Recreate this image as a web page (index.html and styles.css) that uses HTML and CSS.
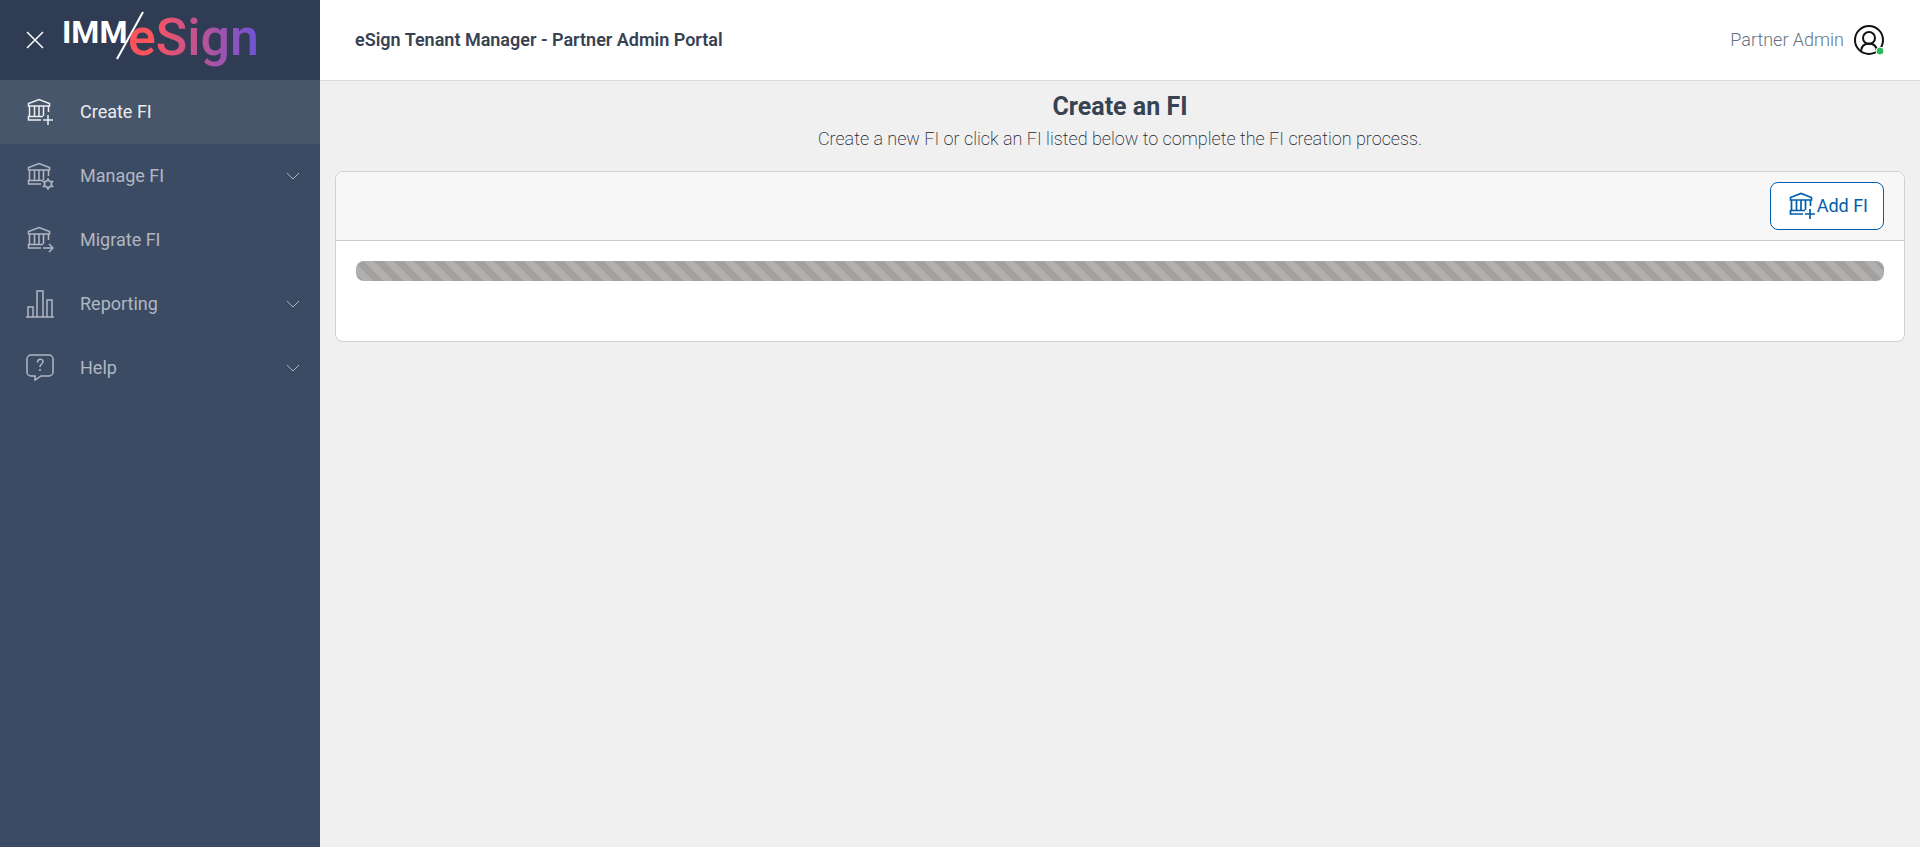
FILE: index.html
```html
<!DOCTYPE html>
<html lang="en">
<head>
    <meta charset="UTF-8">
    <meta name="viewport" content="width=device-width, initial-scale=1.0">
    <title>eSign Tenant Manager</title>
    <link rel="stylesheet" href="styles.css">
</head>
<body>
    <!-- shared icon shapes -->
    <svg class="sprite" aria-hidden="true">
        <symbol id="bank" viewBox="0 0 28 28">
            <path d="M2.500 8V5.500L13 1.500l10.500 4V8zM3.500 8v10M8.500 8v10M13 8v10M17.500 8v10M22.500 8v6M2 18.500h15M2.500 18v4H15"/>
        </symbol>
        <symbol id="chevron" viewBox="0 0 14 8">
            <path d="M1 1l6 6 6-6"/>
        </symbol>
    </svg>

    <aside class="sidebar">
        <div class="sidebar-header">
            <button class="close-btn" type="button" aria-label="Close menu">
                <svg width="18" height="18" viewBox="0 0 18 18"><path d="M1 1l16 16M17 1L1 17"/></svg>
            </button>
            <svg class="logo" width="240" height="80" viewBox="0 0 240 80" role="img" aria-label="IMM eSign">
                <defs>
                    <linearGradient id="logoFill" gradientUnits="userSpaceOnUse" x1="87" y1="20" x2="194" y2="20">
                        <stop offset="0" stop-color="#ff535b"/>
                        <stop offset="1" stop-color="#7054d6"/>
                    </linearGradient>
                </defs>
                <text class="logo-imm" x="0" y="43">IMM</text>
                <path class="logo-slash" d="M55 59L81 12"/>
                <text class="logo-esign" x="66" y="55">eSign</text>
            </svg>
        </div>
        <nav class="nav">
            <a class="nav-item active" href="#">
                <svg class="nav-icon" viewBox="0 0 28 28"><use href="#bank"/><path d="M22 17v10M17 22h10"/></svg>
                <span>Create FI</span>
            </a>
            <a class="nav-item" href="#">
                <svg class="nav-icon" viewBox="0 0 28 28"><use href="#bank"/><path d="M22 17l1.500 2.500h3L25 22l1.500 2.500h-3L22 27l-1.500-2.500h-3L19 22l-1.500-2.500h3z"/></svg>
                <span>Manage FI</span>
                <svg class="chevron"><use href="#chevron"/></svg>
            </a>
            <a class="nav-item" href="#">
                <svg class="nav-icon" viewBox="0 0 28 28"><use href="#bank"/><path d="M17 22h10M23 18l4 4-4 4"/></svg>
                <span>Migrate FI</span>
            </a>
            <a class="nav-item" href="#">
                <svg class="nav-icon" viewBox="0 0 28 28"><path d="M0 27h28M2 27V17h5v10M11 27V1h6v26M21 27V10h5v17"/></svg>
                <span>Reporting</span>
                <svg class="chevron"><use href="#chevron"/></svg>
            </a>
            <a class="nav-item" href="#">
                <svg class="nav-icon" viewBox="0 0 28 28"><path d="M5 1h18a4 4 0 0 1 4 4v13a4 4 0 0 1-4 4h-8l-6 4v-4H5a4 4 0 0 1-4-4V5a4 4 0 0 1 4-4zM11.500 8.500c0-4.500 5.500-4 5.500-1 0 2.500-3 2.500-3 5.500M14 15v2"/></svg>
                <span>Help</span>
                <svg class="chevron"><use href="#chevron"/></svg>
            </a>
        </nav>
    </aside>

    <div class="page">
        <header class="topbar">
            <div class="portal-name">eSign Tenant Manager - Partner Admin Portal</div>
            <a class="user" href="#">
                <span>Partner Admin</span>
                <svg width="31" height="31" viewBox="0 0 31 31">
                    <g class="avatar"><circle cx="15" cy="15" r="14"/><circle cx="15" cy="13" r="6"/><path d="M7 26c0-10 16-10 16 0"/></g>
                    <circle class="status" cx="26" cy="26" r="4"/>
                </svg>
            </a>
        </header>

        <main class="content">
            <h1>Create an FI</h1>
            <p class="subtitle">Create a new FI or click an FI listed below to complete the FI creation process.</p>

            <section class="card">
                <div class="card-header">
                    <button class="btn-add" type="button">
                        <svg class="btn-icon" viewBox="0 0 28 28"><use href="#bank"/><path d="M22 17v10M17 22h10"/></svg>
                        <span>Add FI</span>
                    </button>
                </div>
                <div class="card-body">
                    <div class="progress" role="progressbar" aria-label="Loading"></div>
                </div>
            </section>
        </main>
    </div>
</body>
</html>
```
FILE: styles.css
```css
* {
    box-sizing: border-box;
}
body {
    display: flex;
    min-height: 100vh;
    margin: 0;
    font-family: Roboto, "Liberation Sans", sans-serif;
    font-size: 18px;
    line-height: 24px;
    color: #374253;
    background: #f0f0f0;
}
svg {
    fill: none;
    stroke: currentColor;
    flex-shrink: 0;
}
.sprite {
    position: absolute;
    width: 0;
    height: 0;
}

/* sidebar */
.sidebar {
    width: 320px;
    flex-shrink: 0;
    background: #3c4b64;
}
.sidebar-header {
    display: flex;
    align-items: center;
    height: 80px;
    padding-left: 26px;
    background: #303c54;
}
.close-btn {
    display: flex;
    margin-right: 18px;
    padding: 0;
    border: 0;
    background: none;
    color: #fff;
    stroke-width: 1.5;
    cursor: pointer;
}
.logo text {
    stroke: none;
}
.logo .logo-imm {
    font-size: 32px;
    font-weight: 700;
    fill: #fff;
}
.logo .logo-esign {
    font-size: 52px;
    font-weight: 500;
    fill: url(#logoFill);
}
.logo-slash {
    stroke: #fff;
    stroke-width: 2;
}
.nav-item {
    display: flex;
    align-items: center;
    height: 64px;
    padding: 0 20px 0 26px;
    color: #b1b7c1;
    text-decoration: none;
}
.nav-item.active {
    background: #48566c;
    color: #ebedef;
}
.nav-icon {
    width: 28px;
    height: 28px;
    margin-right: 26px;
    stroke-width: 1.5;
}
.chevron {
    width: 14px;
    height: 8px;
    margin-left: auto;
}

/* top bar */
.page {
    flex: 1;
    min-width: 0;
}
.topbar {
    display: flex;
    align-items: center;
    justify-content: space-between;
    height: 81px;
    padding: 0 35px;
    background: #fff;
    border-bottom: 1px solid #d8dbe0;
}
.portal-name {
    font-weight: 600;
}
.user {
    display: flex;
    align-items: center;
    gap: 10px;
    color: #677284;
    font-weight: 300;
    text-decoration: none;
}
.avatar {
    stroke: #111;
    stroke-width: 2;
}
.status {
    fill: #2eb85c;
    stroke: #fff;
}

/* content */
.content {
    padding: 12px 15px;
    text-align: center;
}
h1 {
    margin: 0 0 6px;
    font-size: 25px;
    line-height: 28px;
    font-weight: 700;
}
.subtitle {
    margin: 0 0 20px;
    font-weight: 200;
    color: #1b2431;
}
.card {
    overflow: hidden;
    background: #fff;
    border: 1px solid #d0d1d3;
    border-radius: 8px;
}
.card-header {
    display: flex;
    justify-content: flex-end;
    padding: 10px 20px;
    background: #f7f7f7;
    border-bottom: 1px solid #c8c9cf;
}
.btn-add {
    display: flex;
    align-items: center;
    height: 48px;
    padding: 0 15px 0 17px;
    border: 1px solid #005eab;
    border-radius: 8px;
    background: #fff;
    color: #005eab;
    font: inherit;
    cursor: pointer;
}
.btn-icon {
    width: 28px;
    height: 28px;
    margin-right: 1px;
    stroke-width: 1.7;
}
.card-body {
    padding: 20px 20px 60px;
}
.progress {
    height: 20px;
    border-radius: 8px;
    background-color: #a2a19f;
    background-image: linear-gradient(45deg, #b1b0ae 25%, transparent 25%, transparent 50%, #b1b0ae 50%, #b1b0ae 75%, transparent 75%, transparent);
    background-position: 8px 0;
    background-size: 20px 20px;
}
```
